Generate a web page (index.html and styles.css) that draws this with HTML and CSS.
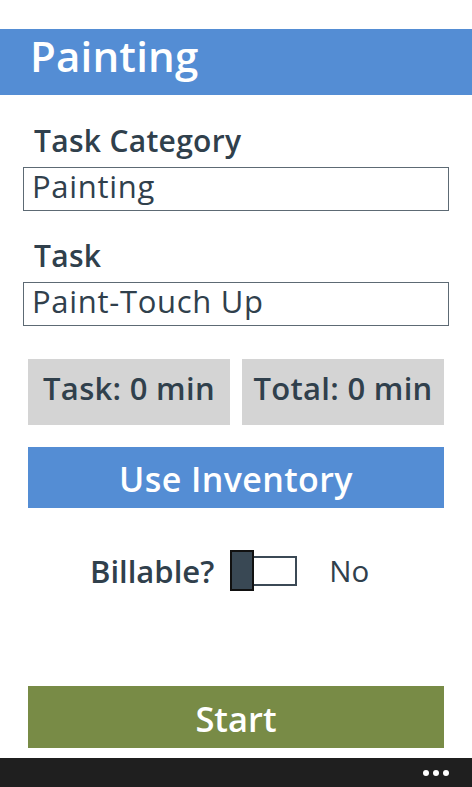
FILE: index.html
```html
<!DOCTYPE html>
<html lang="en">
<head>
<meta charset="utf-8">
<title>Painting</title>
<link rel="stylesheet" href="styles.css">
</head>
<body>
<div class="screen">
  <div class="status"></div>
  <div class="header">Painting</div>
  <div class="content">
    <div class="label label-first">Task Category</div>
    <div class="field">Painting</div>
    <div class="label label-second">Task</div>
    <div class="field">Paint-Touch Up</div>
    <div class="timers">
      <div class="timer">Task: 0 min</div>
      <div class="timer">Total: 0 min</div>
    </div>
    <div class="btn btn-blue">Use Inventory</div>
    <div class="billable">
      <div class="billable-label">Billable?</div>
      <div class="toggle">
        <div class="thumb"></div>
        <div class="track"></div>
      </div>
      <div class="billable-value">No</div>
    </div>
    <div class="btn btn-green">Start</div>
  </div>
  <div class="appbar">
    <span class="dot"></span><span class="dot"></span><span class="dot"></span>
  </div>
</div>
</body>
</html>
```

FILE: styles.css
```css
html, body {
  margin: 0;
  padding: 0;
  background: #ffffff;
}
body {
  font-family: "Open Sans", "Noto Sans", sans-serif;
  color: #30404c;
}
.screen {
  width: 472px;
  height: 787px;
  display: flex;
  flex-direction: column;
  overflow: hidden;
}
.status {
  height: 29px;
}
.header {
  height: 66px;
  background: #548dd4;
  color: #ffffff;
  font-size: 42px;
  font-weight: 600;
  letter-spacing: 0.2px;
  line-height: 53px;
  padding-left: 30px;
  box-sizing: border-box;
}
.content {
  padding: 0 23px;
  display: flex;
  flex-direction: column;
}
.label {
  font-size: 30px;
  font-weight: 600;
  letter-spacing: 0.3px;
  line-height: 36px;
  height: 36px;
  padding-left: 11px;
}
.label-first {
  margin-top: 28px;
  margin-bottom: 8px;
}
.label-second {
  margin-top: 27px;
  margin-bottom: 8px;
}
.field {
  height: 44px;
  box-sizing: border-box;
  border: 1.5px solid #5d6a74;
  font-size: 31px;
  letter-spacing: 0.7px;
  line-height: 37px;
  padding-left: 8px;
}
.timers {
  margin: 33px 5px 0;
  display: flex;
  gap: 12px;
}
.timer {
  flex: 1;
  height: 66px;
  background: #d4d4d4;
  font-size: 31px;
  font-weight: 600;
  letter-spacing: 0.3px;
  line-height: 58px;
  text-align: center;
}
.btn {
  margin: 0 5px;
  color: #ffffff;
  font-weight: 600;
  text-align: center;
  box-sizing: border-box;
}
.btn-blue {
  margin-top: 22px;
  height: 61px;
  padding-top: 3px;
  line-height: 58px;
  font-size: 34px;
  letter-spacing: 0.4px;
  background: #548dd4;
}
.btn-green {
  margin-top: 95px;
  height: 62px;
  padding-top: 4px;
  line-height: 58px;
  font-size: 34.5px;
  background: #788b46;
}
.billable {
  margin-top: 42px;
  height: 41px;
  display: flex;
  align-items: center;
  padding-left: 67px;
}
.billable-label {
  font-size: 31px;
  font-weight: 600;
  line-height: 41px;
  padding-top: 2px;
}
.toggle {
  margin-left: 16px;
  display: flex;
  align-items: center;
}
.thumb {
  width: 24px;
  height: 41px;
  box-sizing: border-box;
  background: #394854;
  border: 2.5px solid #111111;
  position: relative;
  z-index: 1;
}
.track {
  width: 45px;
  height: 30px;
  box-sizing: border-box;
  border: 2px solid #3b4955;
  background: #ffffff;
  margin-left: -2px;
}
.billable-value {
  margin-left: 32px;
  font-size: 29.5px;
  line-height: 41px;
}
.appbar {
  margin-top: 10px;
  height: 29px;
  background: #1f1f1f;
  display: flex;
  justify-content: flex-end;
  align-items: center;
  gap: 4px;
  padding-right: 23px;
}
.dot {
  width: 6px;
  height: 6px;
  border-radius: 50%;
  background: #ffffff;
}
```
